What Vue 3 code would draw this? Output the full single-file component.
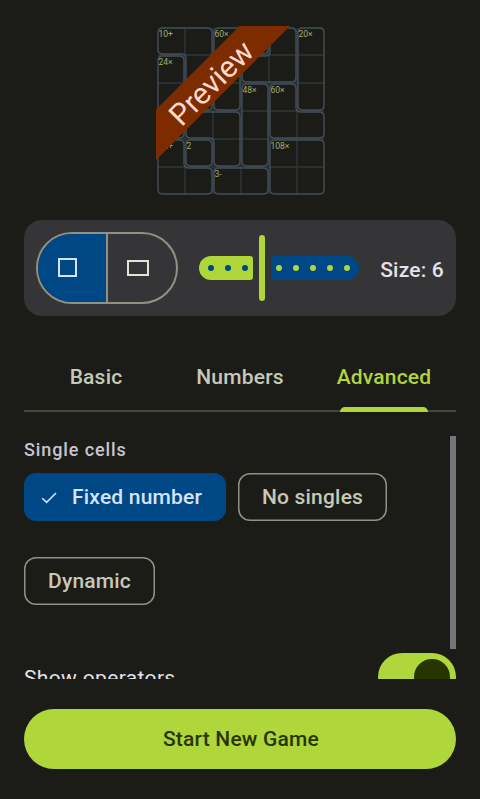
<script setup>
import { ref } from 'vue'

const CELL = 28
const INSET = 1
const RADIUS = 4.5

// Cage outlines in cell units, clockwise.
const cages = [
  { label: '10+', pts: [[0, 0], [2, 0], [2, 3], [1, 3], [1, 1], [0, 1]] },
  { label: '24×', pts: [[0, 1], [1, 1], [1, 4], [0, 4]] },
  { label: '60×', pts: [[2, 0], [4, 0], [4, 1], [3, 1], [3, 3], [2, 3]] },
  { label: '', pts: [[4, 0], [5, 0], [5, 2], [3, 2], [3, 1], [4, 1]] },
  { label: '20×', pts: [[5, 0], [6, 0], [6, 3], [5, 3]] },
  { label: '48×', pts: [[3, 2], [4, 2], [4, 5], [3, 5]] },
  { label: '60×', pts: [[4, 2], [5, 2], [5, 3], [6, 3], [6, 4], [4, 4]] },
  { label: '', pts: [[1, 3], [3, 3], [3, 5], [2, 5], [2, 4], [1, 4]] },
  { label: '2', pts: [[1, 4], [2, 4], [2, 5], [1, 5]] },
  { label: '12+', pts: [[0, 4], [1, 4], [1, 5], [2, 5], [2, 6], [0, 6]] },
  { label: '3-', pts: [[2, 5], [4, 5], [4, 6], [2, 6]] },
  { label: '108×', pts: [[4, 4], [6, 4], [6, 6], [4, 6]] }
]

function outline(pts) {
  const n = pts.length
  const dir = (a, b) => [Math.sign(b[0] - a[0]), Math.sign(b[1] - a[1])]
  return pts.map((p, i) => {
    const din = dir(pts[(i + n - 1) % n], p)
    const dout = dir(p, pts[(i + 1) % n])
    const x = p[0] * CELL + INSET * (-din[1] - dout[1])
    const y = p[1] * CELL + INSET * (din[0] + dout[0])
    const start = `${x - din[0] * RADIUS} ${y - din[1] * RADIUS}`
    const end = `${x + dout[0] * RADIUS} ${y + dout[1] * RADIUS}`
    return `${i ? 'L' : 'M'}${start}Q${x} ${y} ${end}`
  }).join('') + 'Z'
}

const lines = [1, 2, 3, 4, 5]
const tabs = ['Basic', 'Numbers', 'Advanced']
const activeTab = ref('Advanced')
const shape = ref('square')
</script>

<template>
  <main class="screen">
    <section class="preview">
      <svg class="board" width="168" height="168" viewBox="0 0 168 168">
        <g class="thin">
          <template v-for="i in lines" :key="i">
            <line :x1="i * CELL" y1="1" :x2="i * CELL" y2="167" />
            <line x1="1" :y1="i * CELL" x2="167" :y2="i * CELL" />
          </template>
        </g>
        <g v-for="(c, i) in cages" :key="i">
          <path class="cage" :d="outline(c.pts)" />
          <text class="hint" :x="c.pts[0][0] * CELL + 1.5" :y="c.pts[0][1] * CELL + 10">{{ c.label }}</text>
        </g>
      </svg>
      <svg class="ribbon" width="136" height="136" viewBox="0 0 136 136">
        <path d="M83.5 0H134L0 134V83.5Z" fill="#7d2c00" />
        <text class="ribbon-text" transform="translate(25.5 101.5) rotate(-45)">Preview</text>
      </svg>
    </section>

    <section class="size-card">
      <div class="segments">
        <button class="segment" :class="{ on: shape === 'square' }" @click="shape = 'square'">
          <span class="glyph square"></span>
        </button>
        <button class="segment" :class="{ on: shape === 'rect' }" @click="shape = 'rect'">
          <span class="glyph rect"></span>
        </button>
      </div>
      <div class="slider">
        <div class="track done"><i v-for="n in 3" :key="n"></i></div>
        <div class="thumb"></div>
        <div class="track rest"><i v-for="n in 5" :key="n"></i></div>
      </div>
      <div class="size">Size: 6</div>
    </section>

    <nav class="tabs">
      <button v-for="t in tabs" :key="t" class="tab" :class="{ active: t === activeTab }" @click="activeTab = t">
        <span>{{ t }}</span>
      </button>
    </nav>

    <section class="options">
      <h2 class="heading">Single cells</h2>
      <div class="chips">
        <button class="chip selected">
          <svg width="20" height="20" viewBox="0 0 20 20"><path d="M3.2 11.3L7.6 15.4L17 6" fill="none" stroke="#d6e3ff" stroke-width="1.5" /></svg>
          <span>Fixed number</span>
        </button>
        <button class="chip none">No singles</button>
        <button class="chip dynamic">Dynamic</button>
      </div>
      <div class="row">
        <span class="row-label">Show operators</span>
        <span class="switch"><span class="knob"></span></span>
      </div>
      <div class="scrollbar"></div>
    </section>

    <button class="start">Start New Game</button>
  </main>
</template>

<style>
body { background: #1b1c17; }
</style>

<style scoped>
* { box-sizing: border-box; }
button { font: inherit; color: inherit; letter-spacing: inherit; background: none; border: 0; padding: 0; margin: 0; }
.screen {
  width: 480px;
  height: 799px;
  padding: 26px 24px 30px;
  display: flex;
  flex-direction: column;
  background: #1b1c17;
  font-family: Roboto, sans-serif;
  font-weight: 500;
  font-size: 21px;
  letter-spacing: 0.2px;
  overflow: hidden;
}
.preview { position: relative; width: 170px; height: 170px; padding: 1px; margin: 0 0 24px 132px; flex: none; }
.board { display: block; overflow: visible; }
.thin line { stroke: #30363a; stroke-width: 1.4; }
.cage { fill: none; stroke: #434f5b; stroke-width: 1.4; }
.hint { font-size: 8.5px; font-weight: 400; fill: #a3ae70; letter-spacing: 0; }
.ribbon { position: absolute; left: 0; top: 0; }
.ribbon-text { font-size: 30px; font-weight: 400; fill: #ffdbcf; letter-spacing: 0; }

.size-card {
  height: 96px;
  flex: none;
  display: flex;
  align-items: center;
  padding: 0 12px;
  border-radius: 18px;
  background: #353437;
}
.segments {
  display: flex;
  width: 142px;
  height: 72px;
  border: 2px solid #909283;
  border-radius: 36px;
  overflow: hidden;
}
.segment { flex: 1; display: flex; align-items: center; justify-content: center; color: #e4e3d5; }
.segment + .segment { border-left: 2px solid #909283; }
.segment.on { background: #004885; color: #d6e3ff; }
.glyph { display: block; border: 2px solid currentColor; }
.glyph.square { width: 19px; height: 19px; margin: 0 9px 2px 0; }
.glyph.rect { width: 22px; height: 16px; margin: 0 8px 1px 0; }
.slider { display: flex; align-items: center; gap: 6px; margin-left: 21px; }
.track { height: 24px; display: flex; align-items: center; gap: 11px; }
.track i { width: 6px; height: 6px; border-radius: 3px; }
.done { width: 54px; padding-left: 9px; background: #afd63a; border-radius: 12px 3px 3px 12px; }
.done i { background: #004885; }
.rest { width: 88px; padding-left: 5px; background: #004885; border-radius: 3px 12px 12px 3px; }
.rest i { background: #afd63a; }
.thumb { width: 6px; height: 66px; border-radius: 3px; background: #afd63a; }
.size { margin-left: auto; color: #e5e1e6; padding-top: 3px; white-space: nowrap; }

.tabs { display: flex; flex: none; height: 72px; margin-top: 24px; border-bottom: 2px solid #44463a; }
.tab { flex: 1; height: 72px; display: flex; flex-direction: column; align-items: center; padding-top: 24px; line-height: 26px; color: #c7c8b7; }
.tab.active { color: #afd63a; }
.tab.active::after {
  content: "";
  width: 88px;
  height: 5px;
  margin-top: auto;
  background: #afd63a;
  border-radius: 5px 5px 0 0;
}

.options { position: relative; flex: none; height: 243px; margin-top: 24px; overflow: hidden; }
.heading { margin: 3px 0 0; font-size: 18px; line-height: 22px; font-weight: 500; letter-spacing: 0.9px; color: #c8c5d0; }
.chips { display: flex; flex-wrap: wrap; gap: 36px 12px; margin-top: 12px; }
.chip {
  height: 48px;
  box-shadow: inset 0 0 0 1.5px #909283;
  border-radius: 12px;
  color: #c7c8b7;
  white-space: nowrap;
}
.chip.selected { display: flex; align-items: center; gap: 13px; width: 202px; padding-left: 15px; box-shadow: none; background: #004885; color: #d6e3ff; }
.none { width: 149px; }
.dynamic { width: 131px; }
.row { display: flex; justify-content: space-between; margin-top: 48px; }
.row-label { font-weight: 400; font-size: 21px; line-height: 26px; padding-top: 12px; color: #e5e1e6; letter-spacing: 0.35px; }
.switch { width: 78px; height: 48px; border-radius: 24px; background: #afd63a; padding: 6px; display: flex; justify-content: flex-end; }
.knob { width: 36px; height: 36px; border-radius: 18px; background: #283500; }
.scrollbar { position: absolute; right: 0; top: 0; width: 6px; height: 213px; background: #77757b; }

.start { flex: none; height: 60px; margin-top: 30px; padding-left: 2px; border-radius: 30px; background: #afd63a; color: #283500; }
</style>
